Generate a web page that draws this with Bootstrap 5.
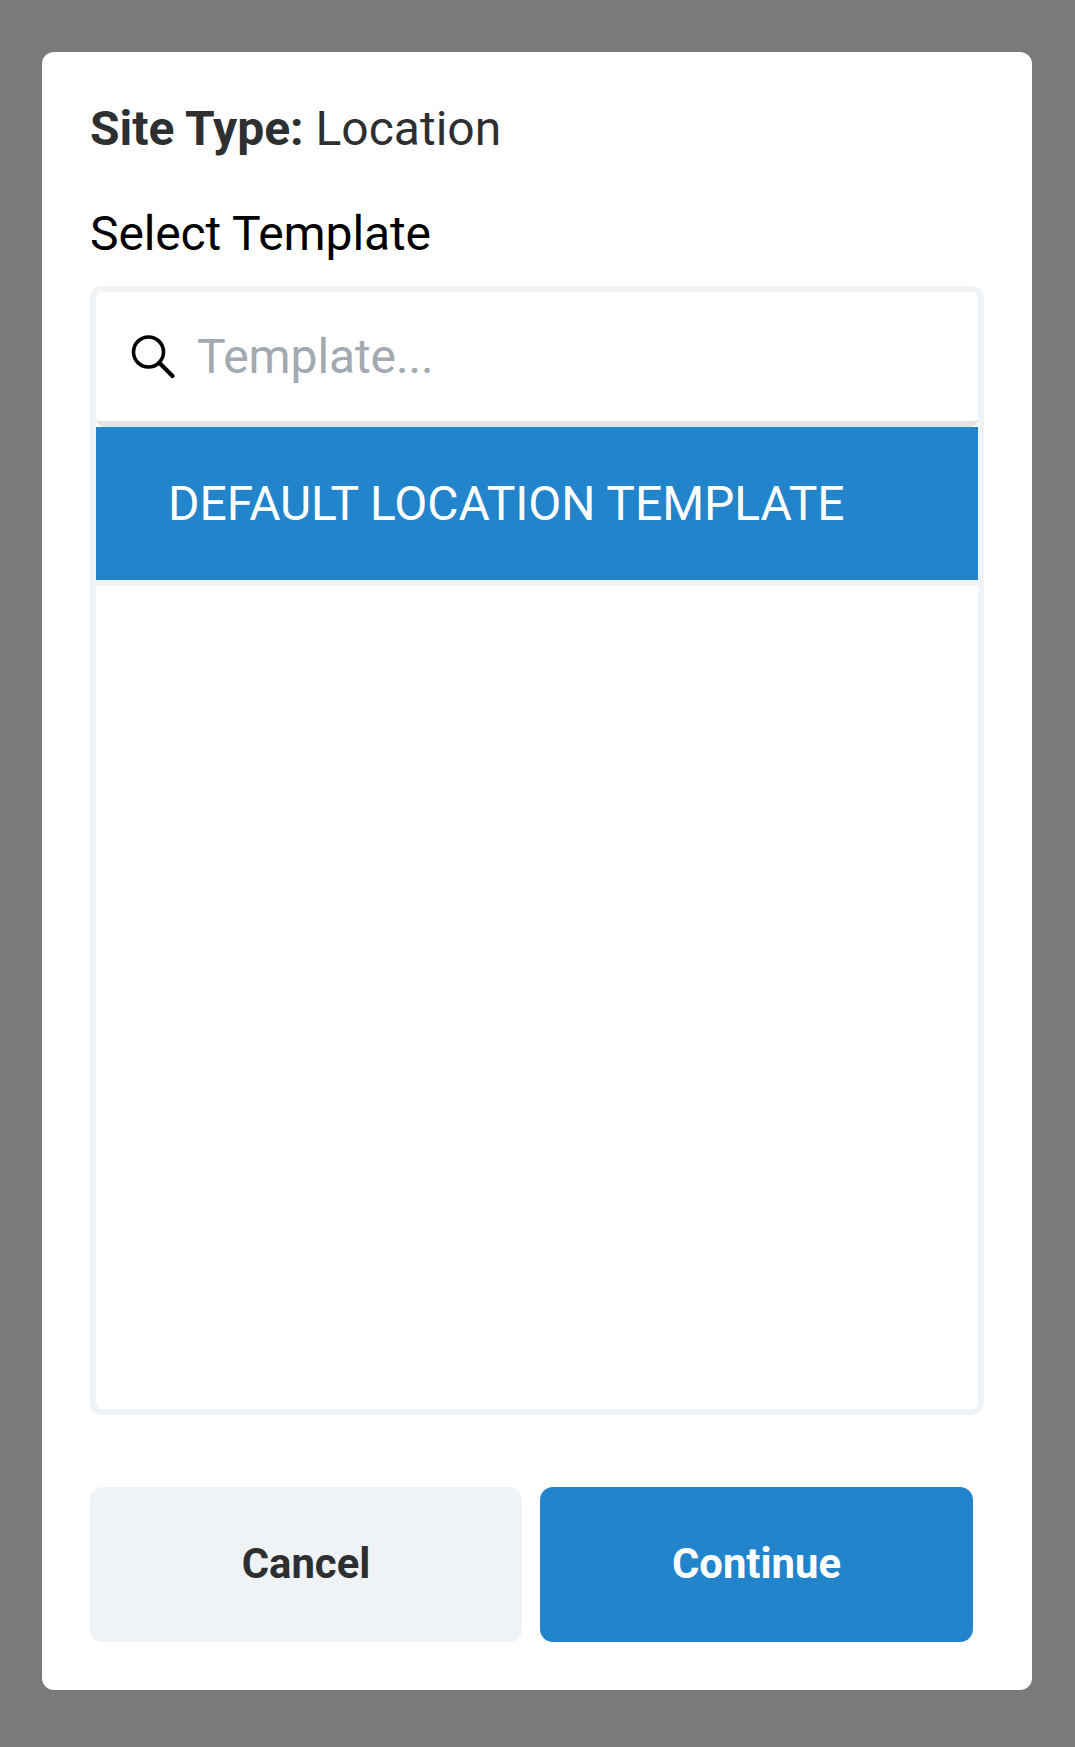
<!DOCTYPE html>
<html lang="en">
<head>
<meta charset="utf-8">
<title>Select Template</title>
<link href="https://cdn.jsdelivr.net/npm/bootstrap@5.3.0/dist/css/bootstrap.min.css" rel="stylesheet">
<style>
html, body { height: 100%; }
body { background: #7a7a7a; font-family: Roboto, "Liberation Sans", sans-serif; padding: 52px 43px 57px 42px; }
.sheet { height: 100%; background: #fff; border-radius: 12px; padding: 49px 48px 48px 48px; }
.site-line { font-size: 48px; line-height: 56px; color: #2d2f31; margin: 0 0 49px; }
.site-line b { font-weight: 700; }
.pick-label { font-size: 48px; line-height: 56px; color: #000; margin: 0 0 24px; letter-spacing: -.12px; }
.pick-box { border: 6px solid #f0f3f6; border-radius: 12px; overflow: hidden; background: #fff; }
.search-row { height: 135px; padding-left: 34px; gap: 20px; border-bottom: 6px solid #dfe5e9; border-radius: 0 0 8px 8px; flex: none; }
.search-row svg { flex: none; }
.search-row input { font-size: 48px; line-height: 56px; color: #2d2f31; border: 0; padding: 0; box-shadow: none; background: transparent; letter-spacing: -.1px; }
.search-row input::placeholder { color: #a3a9b1; opacity: 1; }
.tpl-item { height: 159px; background: #2284ca; color: #fff; font-size: 48px; line-height: 56px; padding: 0 0 0 72px; border: 0; border-bottom: 6px solid #f0f3f6; border-radius: 0; flex: none; letter-spacing: -.05px; }
.foot-row { gap: 18px; margin-top: 72px; padding-right: 11px; }
.foot-btn { height: 155px; border: 0; border-radius: 13px; font-size: 41.8px; line-height: 50px; font-weight: 700; padding: 0 0 1px; }
.foot-cancel { flex: 432 1 0; background: #f0f3f6; color: #2d2f31; }
.foot-go { flex: 433 1 0; background: #2284ca; color: #fff; }
</style>
</head>
<body>
<div class="sheet d-flex flex-column">
  <p class="site-line"><b>Site Type:</b> Location</p>
  <p class="pick-label">Select Template</p>
  <div class="pick-box flex-grow-1 d-flex flex-column">
    <div class="search-row d-flex align-items-center">
      <svg width="47" height="47" viewBox="0 0 47 47" fill="none" stroke="#000" stroke-width="3.6" stroke-linecap="round" aria-hidden="true"><circle cx="18.5" cy="19" r="15"/><path d="M29.5 30 42.5 43" stroke-width="4.2"/></svg>
      <input class="form-control" type="text" placeholder="Template...">
    </div>
    <div class="tpl-item d-flex align-items-center">DEFAULT LOCATION TEMPLATE</div>
  </div>
  <div class="foot-row d-flex">
    <button type="button" class="btn foot-btn foot-cancel">Cancel</button>
    <button type="button" class="btn foot-btn foot-go">Continue</button>
  </div>
</div>
<script src="https://cdn.jsdelivr.net/npm/bootstrap@5.3.0/dist/js/bootstrap.bundle.min.js"></script>
</body>
</html>
